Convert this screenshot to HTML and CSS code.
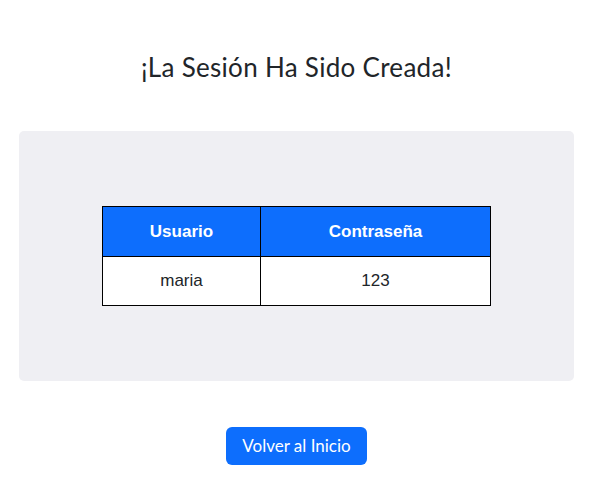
FILE: index.html
```html
<!DOCTYPE html>
<html lang="es">
<head>
<meta charset="utf-8">
<title>Sesión creada</title>
<link rel="stylesheet" href="styles.css">
</head>
<body>
<main class="page">
  <h1 class="title">¡La Sesión Ha Sido Creada!</h1>
  <section class="panel">
    <table class="creds">
      <thead>
        <tr><th class="col-user">Usuario</th><th class="col-pass">Contraseña</th></tr>
      </thead>
      <tbody>
        <tr><td>maria</td><td>123</td></tr>
      </tbody>
    </table>
  </section>
  <div class="actions">
    <a class="btn" href="#">Volver al Inicio</a>
  </div>
</main>
</body>
</html>
```

FILE: styles.css
```css
* { box-sizing: border-box; }
html, body { margin: 0; padding: 0; background: #fff; }
body {
  font-family: "Lato", "Liberation Sans", sans-serif;
  color: #212529;
}
.page {
  display: flex;
  flex-direction: column;
  align-items: stretch;
  padding: 0 23px 0 19px;
}
.title {
  margin: 0;
  padding-top: 49px;
  height: 131px;
  text-align: center;
  font-family: "Lato", sans-serif;
  font-weight: 400;
  font-size: 26px;
  line-height: 36px;
  letter-spacing: 0.3px;
  color: #212529;
}
.panel {
  background: #efeff3;
  border-radius: 5px;
  height: 250px;
  display: flex;
  justify-content: center;
  align-items: center;
}
.creds {
  border-collapse: collapse;
  width: 389px;
  font-family: "Liberation Sans", Arial, sans-serif;
  font-size: 17px;
  text-align: center;
}
.creds th, .creds td { border: 1px solid #000; }
.creds th {
  background: #0d6efd;
  color: #fff;
  font-weight: 700;
  height: 50px;
}
.creds td {
  background: #fff;
  height: 49px;
  color: #212529;
}
.col-user { width: 158px; }
.actions {
  display: flex;
  justify-content: center;
  padding-top: 46px;
}
.btn {
  display: inline-block;
  background: #0d6efd;
  color: #fff;
  text-decoration: none;
  border-radius: 6px;
  width: 141px;
  height: 38px;
  line-height: 38px;
  text-align: center;
  font-family: "Lato", sans-serif;
  font-size: 17px;
}
```
